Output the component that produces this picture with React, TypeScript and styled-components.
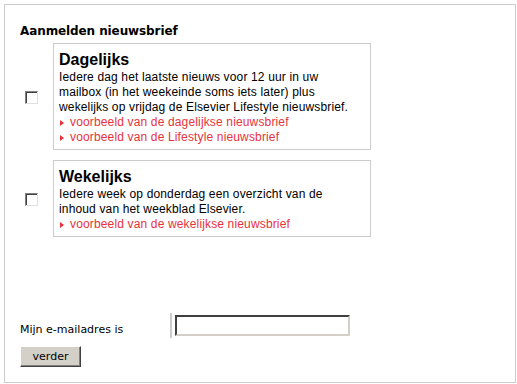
import { createGlobalStyle, styled } from 'styled-components';

const GlobalStyle = createGlobalStyle`
  body {
    margin: 0;
    background: #fff;
    font-family: "Liberation Sans", Arial, sans-serif;
  }
`;

const Frame = styled.div`
  box-sizing: border-box;
  margin: 4px 0 0 4px;
  width: 512px;
  height: 379px;
  border: 1px solid #cccccc;
  padding: 19px 15px 0 15px;
`;

const Heading = styled.h2`
  margin: 0 0 4px 0;
  font-family: "DejaVu Sans", Verdana, sans-serif;
  font-size: 12px;
  letter-spacing: -0.1px;
  font-weight: bold;
  color: #000;
  line-height: 15px;
`;

const Option = styled.div`
  display: flex;
  align-items: center;
  margin-bottom: 10px;
`;

const CheckCell = styled.div`
  box-sizing: border-box;
  width: 33px;
  padding: 1px 0 0 5px;
`;

const Check = styled.span`
  box-sizing: border-box;
  display: block;
  width: 13px;
  height: 13px;
  border: 1px solid;
  border-color: #808080 #e0e0e0 #e0e0e0 #808080;
  box-shadow: inset 1px 1px 0 #404040;
  background: #fff;
`;

const Card = styled.div`
  box-sizing: border-box;
  width: 318px;
  border: 1px solid #cccccc;
  padding: 6px 14px 4px 5px;
`;

const Title = styled.div`
  font-size: 16px;
  font-weight: bold;
  color: #000;
  line-height: 20px;
`;

const Text = styled.div`
  font-size: 12px;
  letter-spacing: 0.15px;
  color: #000;
  line-height: 15px;
`;

const Link = styled.a`
  display: flex;
  align-items: center;
  font-size: 12px;
  letter-spacing: 0.15px;
  color: #e8323c;
  line-height: 15px;
  text-decoration: none;
  cursor: pointer;

  &::before {
    content: '';
    width: 0;
    height: 0;
    border-top: 3.5px solid transparent;
    border-bottom: 3.5px solid transparent;
    border-left: 4px solid #e8323c;
    margin: 0 6px 0 1px;
  }
`;

const EmailRow = styled.div`
  display: flex;
  align-items: center;
  margin-top: 76px;
`;

const Label = styled.label`
  width: 150px;
  font-family: "DejaVu Sans", Verdana, sans-serif;
  font-size: 11px;
  color: #000;
  padding-top: 7px;
`;

const InputWrap = styled.div`
  display: flex;
  align-items: center;
  border-left: 2px solid #cccccc;
  height: 25px;
  padding-left: 3px;
`;

const Input = styled.input`
  box-sizing: border-box;
  width: 175px;
  height: 21px;
  margin: 0;
  padding: 2px;
  border: 2px solid;
  border-color: #404040 #d4d0c8 #d4d0c8 #404040;
  background: #fff;
  font-family: "DejaVu Sans", Verdana, sans-serif;
  font-size: 11px;
  outline: none;
`;

const Button = styled.button`
  box-sizing: border-box;
  display: block;
  margin-top: 8px;
  width: 61px;
  height: 21px;
  padding: 0;
  background: #d4d0c8;
  border: 1px solid;
  border-color: #ffffff #404040 #404040 #ffffff;
  box-shadow: inset -1px -1px 0 #808080;
  font-family: "DejaVu Sans", Verdana, sans-serif;
  font-size: 11px;
  color: #000;
`;

interface IOption {
  title: string;
  text: string;
  links: string[];
}

const options: IOption[] = [
  {
    title: 'Dagelijks',
    text: 'Iedere dag het laatste nieuws voor 12 uur in uw mailbox (in het weekeinde soms iets later) plus wekelijks op vrijdag de Elsevier Lifestyle nieuwsbrief.',
    links: ['voorbeeld van de dagelijkse nieuwsbrief', 'voorbeeld van de Lifestyle nieuwsbrief'],
  },
  {
    title: 'Wekelijks',
    text: 'Iedere week op donderdag een overzicht van de inhoud van het weekblad Elsevier.',
    links: ['voorbeeld van de wekelijkse nieuwsbrief'],
  },
];

function App() {
  return (
    <>
      <GlobalStyle />
      <Frame>
        <Heading>Aanmelden nieuwsbrief</Heading>
        {options.map((o) => (
          <Option key={o.title}>
            <CheckCell>
              <Check />
            </CheckCell>
            <Card>
              <Title>{o.title}</Title>
              <Text>{o.text}</Text>
              {o.links.map((l) => (
                <Link key={l}>{l}</Link>
              ))}
            </Card>
          </Option>
        ))}
        <EmailRow>
          <Label>Mijn e-mailadres is</Label>
          <InputWrap>
            <Input type="text" />
          </InputWrap>
        </EmailRow>
        <Button>verder</Button>
      </Frame>
    </>
  );
}

export default App;
